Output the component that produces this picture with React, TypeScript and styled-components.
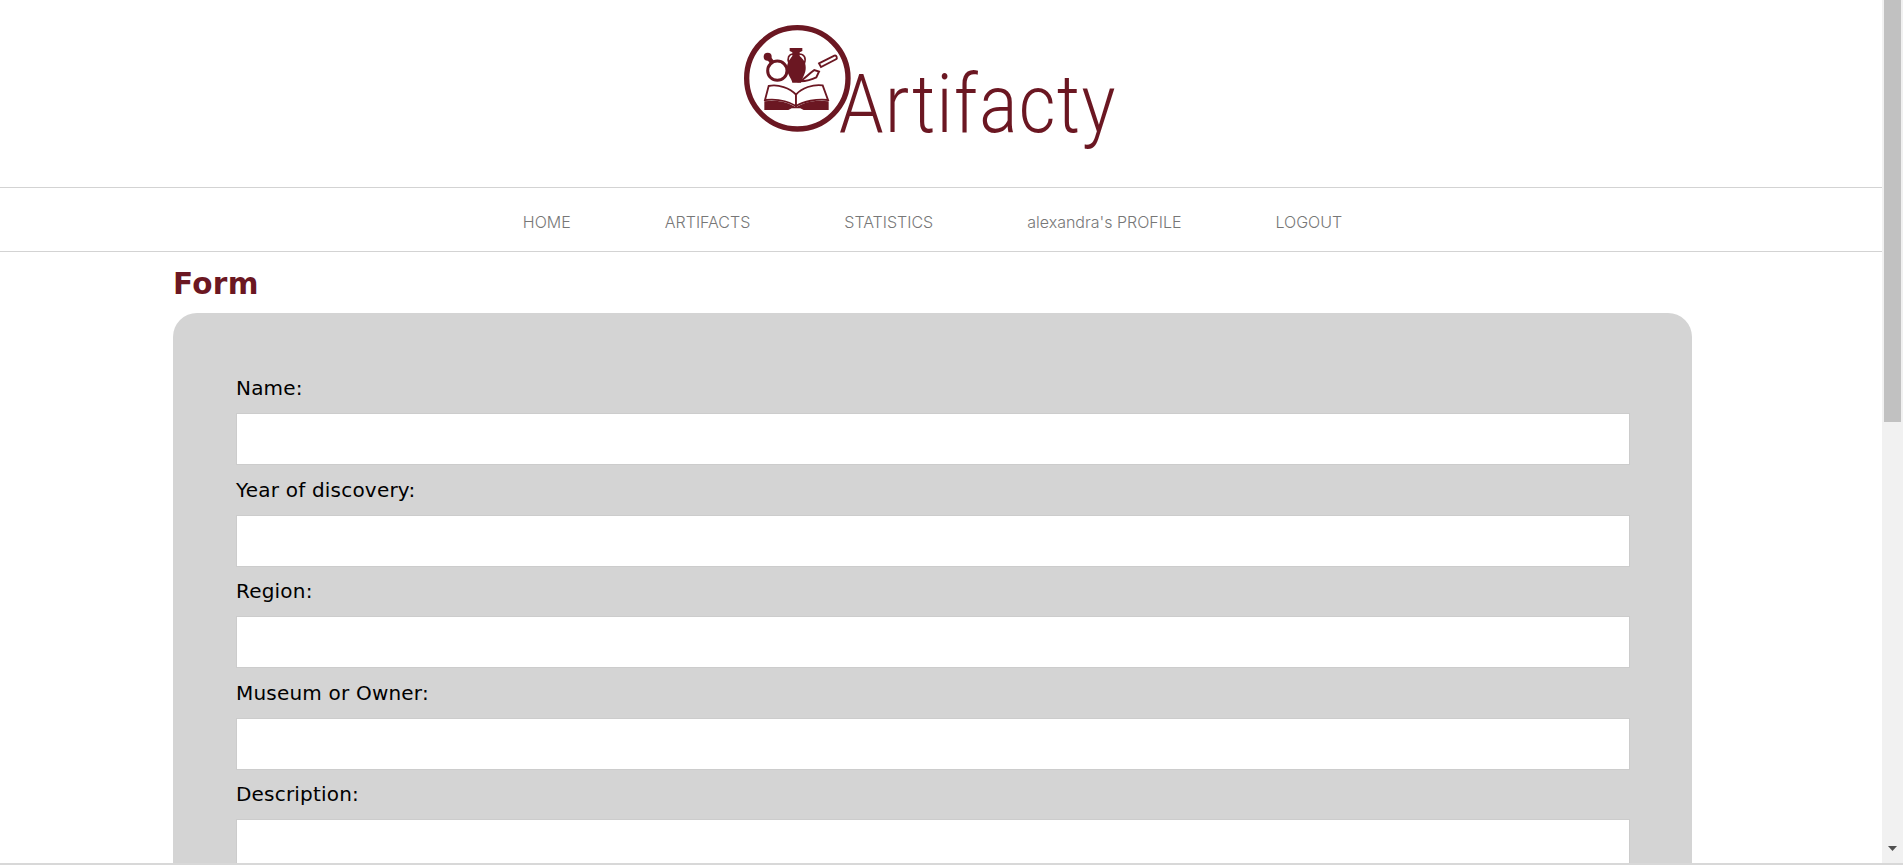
import React from "react";
import styled, { createGlobalStyle } from "styled-components";

const Global = createGlobalStyle`
  html, body { margin: 0; padding: 0; height: 100%; overflow: hidden; background: #fff; }
  * { box-sizing: border-box; }
`;

const Viewport = styled.div`
  display: flex;
  flex-direction: column;
  height: 100vh;
  overflow: hidden;
`;
const Row = styled.div`
  flex: 1;
  min-height: 0;
  display: flex;
`;
const Page = styled.div`
  flex: 1;
  min-width: 0;
  overflow: hidden;
`;
const Header = styled.header`
  height: 187px;
  padding-top: 20px;
  display: flex;
  justify-content: center;
`;
const LogoSvg = styled.svg`
  display: block;
  width: 412px;
  height: 140px;
`;
const LogoText = styled.text`
  font-family: "Roboto", sans-serif;
  font-weight: 300;
  font-size: 81px;
  fill: #6b1722;
`;
const Nav = styled.nav`
  height: 65px;
  border-top: 1px solid #d3d3d3;
  border-bottom: 1px solid #d3d3d3;
  display: flex;
  justify-content: center;
  align-items: center;
  gap: 94px;
  padding: 4px 17px 0 0;
`;
const NavLink = styled.a`
  font-family: "Inter", "Lato", sans-serif;
  font-weight: 300;
  font-size: 16px;
  color: #777;
  text-decoration: none;
`;
const Main = styled.main`
  margin-left: 173px;
  width: 1519px;
`;
const Title = styled.h2`
  margin: 0;
  height: 61px;
  padding-top: 14px;
  font-family: "DejaVu Sans", sans-serif;
  font-weight: 700;
  font-size: 29.5px;
  letter-spacing: 0.3px;
  line-height: 36px;
  color: #6b1722;
`;
const Panel = styled.form`
  background: #d4d4d4;
  border-radius: 24px;
  padding: 51px 62px 40px 63px;
  display: flex;
  flex-direction: column;
`;
const Field = styled.div`
  height: 101.4px;
  display: flex;
  flex-direction: column;
  justify-content: flex-end;
`;
const Label = styled.label`
  font-family: "DejaVu Sans", sans-serif;
  font-size: 20px;
  letter-spacing: 0.2px;
  line-height: 24px;
  color: #000;
  margin-bottom: 13px;
`;
const Input = styled.input`
  display: block;
  width: 100%;
  height: 52px;
  border: 1px solid #ccc;
  background: #fff;
  padding: 0 12px;
`;
const Scrollbar = styled.div`
  width: 21px;
  background: #f1f1f1;
  display: flex;
  flex-direction: column;
  align-items: center;
`;
const Thumb = styled.div`
  width: 17px;
  height: 422px;
  background: #c1c1c1;
`;
const ArrowSlot = styled.div`
  margin-top: auto;
  height: 17px;
  display: flex;
  align-items: flex-start;
  justify-content: center;
`;
const Arrow = styled.svg`
  display: block;
  width: 9px;
  height: 5px;
`;
const BottomEdge = styled.div`
  height: 2px;
  background: #d8d8d8;
`;

const Emblem = () => (
  <g transform="scale(0.33333)">
    <circle cx="187" cy="175" r="152" fill="none" stroke="#6b1722" strokeWidth="16" />
    <line x1="112" y1="128" x2="98" y2="110" stroke="#6b1722" strokeWidth="14" />
    <circle cx="98" cy="110" r="12" fill="#6b1722" />
    <circle cx="127" cy="152" r="29" fill="#fff" stroke="#6b1722" strokeWidth="9" />
    <path
      d="M196 184 C212 172 224 160 238 150 L252 155 L244 172 C232 178 214 183 196 184 Z"
      fill="#fff"
      stroke="#6b1722"
      strokeWidth="6"
    />
    <path d="M176 102 C160 102 156 116 162 130 M192 102 C208 102 214 114 208 130" fill="none" stroke="#6b1722" strokeWidth="5" />
    <path
      d="M164 84 H202 V93 L194 97 V108 C206 118 214 130 212 148 C210 166 200 176 198 188 H172 C170 176 158 166 156 146 C155 130 164 118 172 108 V97 L164 93 Z"
      fill="#6b1722"
    />
    <path
      d="M252 130 L298 107 C305 105 308 114 303 118 L258 141 Z"
      fill="#fff"
      stroke="#6b1722"
      strokeWidth="5.5"
    />
    <path
      d="M101 198 C130 192 165 204 183 224 L183 258 C160 244 125 236 90 240 Z"
      fill="#fff"
      stroke="#6b1722"
      strokeWidth="5.5"
    />
    <path
      d="M263 196 C234 192 200 204 183 224 L183 258 C206 244 245 236 279 240 Z"
      fill="#fff"
      stroke="#6b1722"
      strokeWidth="5.5"
    />
    <path
      d="M88 244 C125 238 160 246 183 262 C206 246 245 238 281 244 L281 270 H206 L196 265 H170 L160 270 H88 Z"
      fill="#6b1722"
    />
  </g>
);

const fields = ["Name:", "Year of discovery:", "Region:", "Museum or Owner:", "Description:"];
const links = ["HOME", "ARTIFACTS", "STATISTICS", "alexandra's PROFILE", "LOGOUT"];

export default function App() {
  return (
    <Viewport>
      <Global />
      <Row>
        <Page>
          <Header>
            <LogoSvg viewBox="0 0 412 140">
              <Emblem />
              <g transform="translate(104 112) scale(0.88 1)">
                <LogoText x="0" y="0" textLength="314" lengthAdjust="spacing">
                  Artifacty
                </LogoText>
              </g>
            </LogoSvg>
          </Header>
          <Nav>
            {links.map((l) => (
              <NavLink key={l} href="#">
                {l}
              </NavLink>
            ))}
          </Nav>
          <Main>
            <Title>Form</Title>
            <Panel>
              {fields.map((f) => (
                <Field key={f}>
                  <Label>{f}</Label>
                  <Input type="text" />
                </Field>
              ))}
            </Panel>
          </Main>
        </Page>
        <Scrollbar>
          <Thumb />
          <ArrowSlot>
            <Arrow viewBox="0 0 9 5">
              <path d="M0 0 H9 L4.5 5 Z" fill="#505050" />
            </Arrow>
          </ArrowSlot>
        </Scrollbar>
      </Row>
      <BottomEdge />
    </Viewport>
  );
}
